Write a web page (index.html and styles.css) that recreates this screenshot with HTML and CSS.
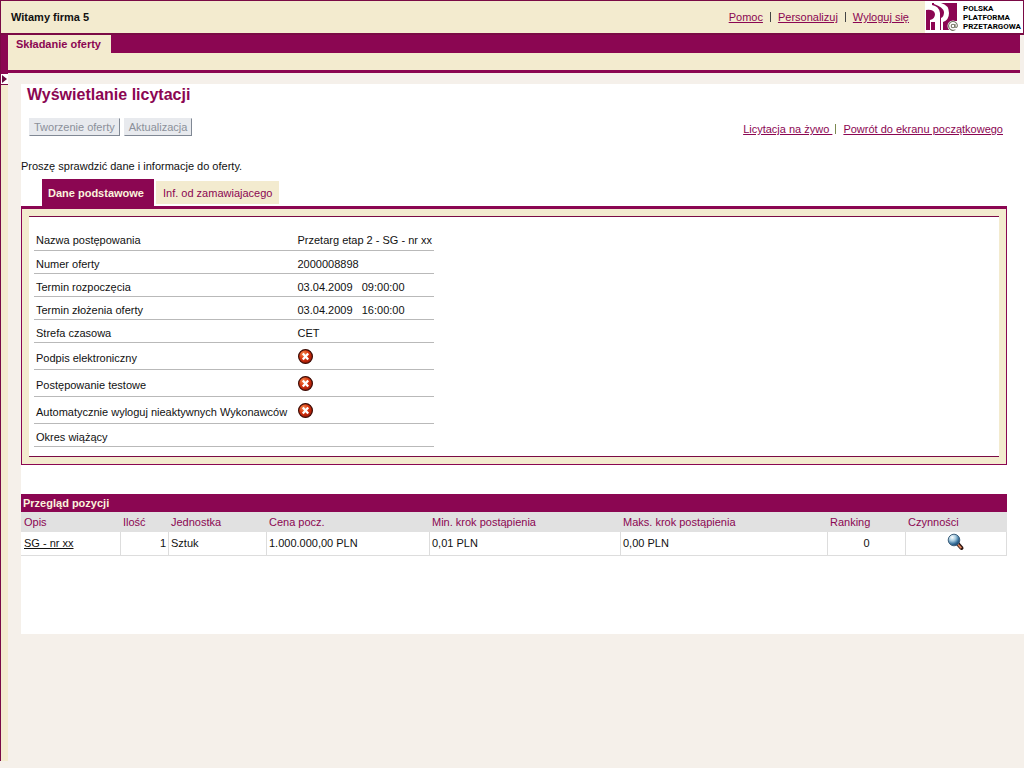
FILE: index.html
```html
<!DOCTYPE html>
<html lang="pl">
<head>
<meta charset="utf-8">
<title>Wyświetlanie licytacji</title>
<link rel="stylesheet" href="styles.css">
</head>
<body>
<svg class="defs" width="0" height="0" aria-hidden="true">
  <defs>
    <radialGradient id="red" cx="35%" cy="30%" r="75%">
      <stop offset="0" stop-color="#f58a4e"/><stop offset=".5" stop-color="#d8350f"/><stop offset="1" stop-color="#9c1606"/>
    </radialGradient>
    <radialGradient id="lens" cx="35%" cy="28%" r="75%">
      <stop offset="0" stop-color="#ffffff"/><stop offset=".4" stop-color="#a6cbe0"/><stop offset=".75" stop-color="#39719c"/><stop offset="1" stop-color="#1d4468"/>
    </radialGradient>
    <symbol id="no" viewBox="0 0 15 15">
      <circle cx="7.5" cy="7.5" r="6.9" fill="url(#red)" stroke="#3a0c06" stroke-width="1.2"/>
      <path d="M4.800 4.500l5.400 6M10.200 4.500l-5.400 6" stroke="#fff" stroke-width="2.300"/>
    </symbol>
  </defs>
</svg>
<header class="top">
  <strong class="welcome">Witamy firma 5</strong>
  <nav class="user-links">
    <a href="#">Pomoc</a><span class="sep"></span><a href="#">Personalizuj</a><span class="sep"></span><a href="#">Wyloguj się</a>
  </nav>
  <div class="logo">
    <svg class="mark" width="34" height="30" viewBox="0 0 34 30" aria-hidden="true">
      <path d="M1 1H32V19H25V28H1Z" fill="#8b0652"/>
      <path d="M1 1H7V3Q14 4 15 11V28H10V20H6V28H5V18Q10 17 10 12Q9 7 1 8Z" fill="#fff"/>
      <path d="M9 1H16Q24 3 24 11Q24 18 18 20V28H16V16Q19 15 19 10Q18 5 9 2Z" fill="#fff"/>
      <circle cx="28" cy="24" r="5.500" fill="#fff"/>
      <circle cx="28" cy="24" r="1.800" fill="none" stroke="#776" stroke-width="1.100"/>
      <path d="M30 22v3q2 1 2.400-1a4.400 4.400 0 1 0-2 3.600" fill="none" stroke="#776" stroke-width="1.100"/>
    </svg>
    <span class="logo-text">POLSKA<br>PLATFORMA<br>PRZETARGOWA</span>
  </div>
</header>
<div class="frame">
  <aside class="rail">
    <button class="expand" type="button" aria-label="Rozwiń"><svg width="5" height="8" viewBox="0 0 5 8"><path d="M0 0L5 4L0 8Z" fill="#6b0a40"/></svg></button>
  </aside>
  <div class="main">
    <nav class="nav"><a class="nav-tab" href="#">Składanie oferty</a></nav>
    <main class="page">
      <h1>Wyświetlanie licytacji</h1>
      <div class="toolbar">
        <button class="btn" type="button" disabled>Tworzenie oferty</button>
        <button class="btn" type="button" disabled>Aktualizacja</button>
        <div class="page-links"><a href="#">Licytacja na żywo&nbsp;</a><span class="sep green"></span><a href="#">Powrót do ekranu początkowego</a></div>
      </div>
      <p class="hint">Proszę sprawdzić dane i informacje do oferty.</p>
      <div class="tabs">
        <button class="tab active" type="button">Dane podstawowe</button>
        <button class="tab" type="button">Inf. od zamawiajacego</button>
      </div>
      <section class="panel">
        <div class="panel-in">
          <table class="facts">
            <tr><th scope="row">Nazwa postępowania</th><td>Przetarg etap 2 - SG - nr xx</td></tr>
            <tr><th scope="row">Numer oferty</th><td>2000008898</td></tr>
            <tr><th scope="row">Termin rozpoczęcia</th><td>03.04.2009 &nbsp; 09:00:00</td></tr>
            <tr><th scope="row">Termin złożenia oferty</th><td>03.04.2009 &nbsp; 16:00:00</td></tr>
            <tr><th scope="row">Strefa czasowa</th><td>CET</td></tr>
            <tr class="tall"><th scope="row">Podpis elektroniczny</th><td><svg role="img" aria-label="Nie" width="15" height="15"><use href="#no"/></svg></td></tr>
            <tr class="tall"><th scope="row">Postępowanie testowe</th><td><svg role="img" aria-label="Nie" width="15" height="15"><use href="#no"/></svg></td></tr>
            <tr class="tall"><th scope="row">Automatycznie wyloguj nieaktywnych Wykonawców</th><td><svg role="img" aria-label="Nie" width="15" height="15"><use href="#no"/></svg></td></tr>
            <tr><th scope="row">Okres wiążący</th><td></td></tr>
          </table>
        </div>
      </section>
      <table class="items">
        <caption>Przegląd pozycji</caption>
        <colgroup><col class="c1"><col class="c2"><col class="c3"><col class="c4"><col class="c5"><col class="c6"><col class="c7"><col class="c8"></colgroup>
        <thead><tr><th>Opis</th><th>Ilość</th><th>Jednostka</th><th>Cena pocz.</th><th>Min. krok postąpienia</th><th>Maks. krok postąpienia</th><th>Ranking</th><th>Czynności</th></tr></thead>
        <tbody><tr>
          <td><a href="#">SG - nr xx</a></td><td class="num">1</td><td>Sztuk</td><td>1.000.000,00 PLN</td><td>0,01 PLN</td><td>0,00 PLN</td><td class="mid">0</td>
          <td class="mid"><button class="look" type="button" aria-label="Szczegóły"><svg width="18" height="18" viewBox="0 0 18 18">
            <path d="M11 11L14.500 15" stroke="#2b1410" stroke-width="4" stroke-linecap="round"/>
            <path d="M11 11.500L14.300 15.200" stroke="#e0865e" stroke-width="1.800"/>
            <circle cx="7" cy="7" r="5.800" fill="url(#lens)" stroke="#40617d"/>
          </svg></button></td>
        </tr></tbody>
      </table>
    </main>
  </div>
</div>
</body>
</html>
```
FILE: styles.css
```css
* { box-sizing: border-box; }
body {
  margin: 0;
  min-height: 100vh;
  display: flex;
  flex-direction: column;
  background: #f5f0ea;
  color: #111;
  font: 11px/14px "Liberation Sans", Arial, sans-serif;
}
a { color: #8b0652; }
button { font: inherit; margin: 0; cursor: pointer; }
.defs { position: absolute; }

.top {
  display: flex;
  align-items: center;
  height: 35px;
  border: 1px solid #7a0a45;
  border-bottom-width: 2px;
  background: #f3ebcf;
}
.welcome { margin-left: 10px; flex: 1; }
.user-links { display: flex; align-items: center; margin-right: 16px; }
.sep { width: 1px; height: 10px; margin: 0 7px; background: #444; }
.sep.green { margin: 0 7px 0 3px; background: #7c8a50; }
.logo {
  display: flex;
  align-items: center;
  width: 98px;
  height: 32px;
  background: #fff;
}
.mark { flex: none; }
.logo-text { margin-left: 4px; font: 700 8px/9px Roboto, "Liberation Sans", sans-serif; color: #000; }

.frame { flex: 1; display: flex; }
.rail {
  width: 8px;
  padding-top: 39px;
  border-left: 1px solid #7a0a45;
  margin-bottom: 7px;
  background: linear-gradient(#8b0652 39px, #f3ebcf 39px);
}
.expand {
  display: flex;
  align-items: center;
  width: 7px;
  height: 11px;
  padding: 0 0 0 1px;
  border: 0;
  border-bottom: 1px solid #7a0a45;
  background: #fff;
}
.main { flex: 1; min-width: 0; }
.nav {
  display: flex;
  align-items: flex-start;
  height: 38px;
  margin-right: 4px;
  border-bottom: 3px solid #8b0652;
  background: linear-gradient(#8b0652 18px, #f3ebcf 18px);
}
.nav-tab {
  height: 18px;
  padding: 2px 10px 2px 8px;
  background: #f3ebcf;
  font-weight: 700;
  text-decoration: none;
}

.page {
  margin: 11px 0 0 13px;
  min-height: 550px;
  padding: 1px 17px 0 0;
  background: #fff;
}
h1 { margin: 0 0 0 6px; font-size: 16px; line-height: 20px; color: #8b0652; }
.toolbar { display: flex; align-items: flex-start; gap: 4px; margin: 13px 4px 0 8px; }
.btn {
  height: 18px;
  padding: 0 4px;
  border: 1px solid #e8eaee;
  border-right-color: #808894;
  border-bottom-color: #808894;
  background: #e8eaee;
  color: #8b909a;
  line-height: 16px;
}
.page-links { display: flex; align-items: center; margin: 4px 0 0 auto; }
.hint { margin: 23px 0 0; }
.tabs { display: flex; align-items: center; gap: 2px; height: 27px; margin: 6px 0 0 21px; }
.tab {
  height: 23px;
  padding: 0 7px;
  border: 0;
  background: #f3ebcf;
  color: #8b0652;
}
.tab.active { height: 27px; padding: 0 10px 0 6px; background: #8b0652; color: #fbf3dd; font-weight: 700; }

.panel {
  border: 1px solid #8b0652;
  border-top-width: 3px;
  padding: 7px;
  background: #f3ebcf;
}
.panel-in {
  border: solid #7a0a45;
  border-width: 1px 0;
  padding: 10px 5px 9px;
  background: #fff;
}
.facts { border-collapse: collapse; width: 400px; }
.facts th, .facts td {
  height: 23px;
  padding: 6px 2px 2px;
  border-bottom: 1px solid #b9b9b9;
  font-weight: 400;
  text-align: left;
  white-space: nowrap;
}
.facts th { width: 262px; }
.facts .tall th { height: 27px; }
.facts .tall td { padding: 2px 2px 0; }
.facts svg { display: block; }

.items {
  width: 100%;
  margin-top: 29px;
  border-collapse: separate;
  border-spacing: 0;
  table-layout: fixed;
}
.items caption {
  height: 18px;
  padding: 2px;
  background: #8b0652;
  color: #fbf3dd;
  font-weight: 700;
  text-align: left;
}
.items th { height: 20px; padding: 0 2px; background: #e1e1e1; color: #8b0652; font-weight: 400; text-align: left; }
.items th:first-child { padding-left: 3px; }
.items td { height: 24px; padding: 0 2px; border: solid #ddd; border-width: 0 1px 1px 0; }
.items td:first-child { padding-left: 3px; border-left-width: 0; }
.items td a { color: #111; }
.items .num { text-align: right; }
.items .mid { text-align: center; }
.c1 { width: 100px; }
.c2 { width: 48px; }
.c3 { width: 98px; }
.c4 { width: 163px; }
.c5 { width: 191px; }
.c6 { width: 207px; }
.c7 { width: 78px; }
.c8 { width: 101px; }
.look { padding: 0; border: 0; background: none; }
.look svg { display: block; }
```
